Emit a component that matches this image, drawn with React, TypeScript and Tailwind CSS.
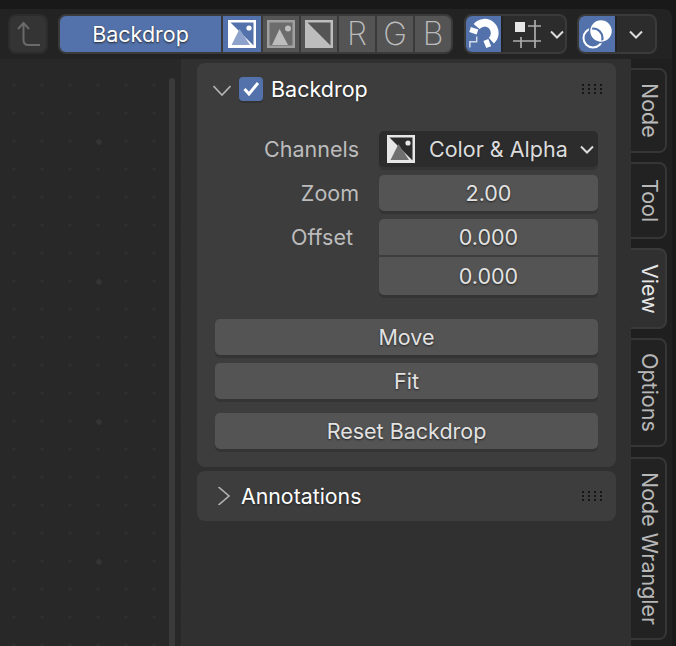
import React from "react";

const font = { fontFamily: "Inter, 'Noto Sans', sans-serif" };

function ColorAlpha({ fg, tri, inner }: { fg: string; tri: string; inner: string }) {
  return (
    <svg width="28" height="28" viewBox="0 0 28 28">
      <rect x="1.25" y="1.25" width="25.5" height="25.5" fill={inner} stroke={fg} strokeWidth="2.5" />
      <path d="M1 1 L27 27 L1 27 Z" fill={fg} />
      <path d="M11.5 9 L22 25 L3.5 25 Z" fill={tri} />
      <circle cx="21" cy="8" r="2.6" fill={fg} />
    </svg>
  );
}

function ColorIcon() {
  return (
    <svg width="28" height="28" viewBox="0 0 28 28">
      <rect x="1.25" y="1.25" width="25.5" height="25.5" fill="#6c6c6c" stroke="#a0a0a0" strokeWidth="2.5" />
      <path d="M12.5 9 L21 25 L5 25 Z" fill="#bdbdbd" />
      <circle cx="21" cy="8.5" r="3" fill="#bdbdbd" />
    </svg>
  );
}

function AlphaIcon() {
  return (
    <svg width="28" height="28" viewBox="0 0 28 28">
      <rect x="1.25" y="1.25" width="25.5" height="25.5" fill="#545454" stroke="#bdbdbd" strokeWidth="2.5" />
      <path d="M1 1 L27 27 L1 27 Z" fill="#bdbdbd" />
    </svg>
  );
}

function Magnet() {
  return (
    <svg width="36" height="36" viewBox="0 0 36 36" fill="none">
      <path d="M10.9 10.3 A10.5 10.5 0 1 1 26.1 24.7" stroke="#fff" strokeWidth="8" />
      <path d="M3.34 15.89 L5.06 10.75 L12.66 13.31 L10.94 18.45 Z M20.87 32.52 L25.89 30.52 L22.93 23.08 L17.91 25.08 Z" fill="#fff" />
      <path d="M4 32 V26 H11 V20.5" stroke="#fff" strokeOpacity="0.75" strokeWidth="1.5" />
    </svg>
  );
}

function Snap() {
  return (
    <svg width="28" height="28" viewBox="0 0 28 28" fill="none" stroke="#adadad" strokeWidth="1.7">
      <rect x="2" y="2" width="10" height="10" fill="#e6e6e6" stroke="none" />
      <path d="M22 0 V28 M8 17 V28 M0 21 H28 M15 6 H28" />
    </svg>
  );
}

function Overlay() {
  return (
    <svg width="36" height="36" viewBox="0 0 36 36" fill="none">
      <defs>
        <clipPath id="ovl">
          <circle cx="22" cy="15" r="9.5" />
        </clipPath>
      </defs>
      <circle cx="14" cy="22" r="9.5" stroke="#fff" strokeWidth="2" />
      <circle cx="22" cy="15" r="11.5" fill="#fff" stroke="#5372ab" strokeWidth="1.5" />
      <circle cx="14" cy="22" r="9.5" stroke="#5372ab" strokeWidth="2.2" clipPath="url(#ovl)" />
    </svg>
  );
}

function Chevron({ dir = "down" }: { dir?: "down" | "right" }) {
  return (
    <svg width="18" height="18" viewBox="0 0 18 18" className="shrink-0" fill="none" stroke="#b4b4b4" strokeWidth="1.6">
      {dir === "down" ? <path d="M0.5 6 L9 15 L17.5 6" /> : <path d="M3.5 0 L14 9 L3.5 18" />}
    </svg>
  );
}

function SmallChevron() {
  return (
    <svg width="14" height="9" viewBox="0 0 14 9" className="shrink-0" fill="none" stroke="#dcdcdc" strokeWidth="2">
      <path d="M1 1.5 L7 7.5 L13 1.5" />
    </svg>
  );
}

function Grip() {
  return (
    <div className="mr-[-4px] grid grid-cols-4 gap-x-[4px] gap-y-[2px]">
      {Array.from({ length: 12 }).map((_, i) => (
        <div key={i} className="w-[2px] h-[2px] bg-[#161616]" />
      ))}
    </div>
  );
}

function Tab({ label, className, active }: { label: string; className: string; active?: boolean }) {
  return (
    <div
      className={`${className} w-[36px] pl-[3px] rounded-r-[8px] border-r-2 border-t-2 border-b-2 flex items-center justify-center ${
        active ? "bg-[#303030] border-[#3a3a3a] text-[#e6e6e6]" : "bg-[#222222] border-[#363636] text-[#b8b8b8]"
      }`}
    >
      <span className="text-[21.5px] [writing-mode:vertical-rl] whitespace-nowrap">{label}</span>
    </div>
  );
}

function Button({ label, className = "" }: { label: string; className?: string }) {
  return (
    <div
      className={`h-[36px] rounded-[5px] bg-[#545454] shadow-[0_3px_0_#343434] flex items-center justify-center text-[21.5px] text-[#e2e2e2] [text-shadow:0_1px_2px_#222] ${className}`}
    >
      {label}
    </div>
  );
}

function Label({ children, className = "w-[144px] ml-0" }: { children: React.ReactNode; className?: string }) {
  return <div className={`shrink-0 text-right text-[21.5px] leading-[36px] text-[#bcbcbc] ${className}`}>{children}</div>;
}

export default function App() {
  return (
    <div style={font} className="w-[676px] h-[646px] overflow-hidden flex flex-col bg-[#191919] pr-[4px]">
      <header className="mt-[9px] h-[50px] shrink-0 bg-[#232323] rounded-tr-[8px] flex items-start pt-[5px] pl-[8px]">
        <div className="w-[40px] h-[40px] rounded-[8px] bg-[#343434] border-2 border-[#2c2c2c] flex items-center justify-center">
          <svg width="28" height="28" viewBox="0 0 28 28" fill="none" stroke="#6a6a6a" strokeWidth="2">
            <path d="M4 9 L9.5 3 L15 9 M9.5 3 V20 Q9.5 25 14.5 25 H26" />
          </svg>
        </div>
        <div className="ml-[10px] h-[40px] flex gap-[2px] rounded-[8px] border-2 border-[#3a3a3a] bg-[#3a3a3a] overflow-hidden">
          <div className="w-[161px] bg-[#5372ab] flex items-center justify-center text-[21.5px] text-white [text-shadow:0_1px_2px_#222]">
            Backdrop
          </div>
          <div className="w-[38px] bg-[#5372ab] flex items-center justify-center">
            <ColorAlpha fg="#ffffff" tri="#8ea3cc" inner="#5372ab" />
          </div>
          <div className="w-[36px] bg-[#545454] flex items-center justify-center">
            <ColorIcon />
          </div>
          <div className="w-[36px] bg-[#545454] flex items-center justify-center">
            <AlphaIcon />
          </div>
          {["R", "G", "B"].map((c) => (
            <div key={c} className="w-[36px] bg-[#545454] flex items-center justify-center text-[32px] font-extralight text-[#bcbcbc]">
              {c}
            </div>
          ))}
        </div>
        <div className="ml-[11px] h-[40px] w-[103px] flex rounded-[8px] border-2 border-[#3a3a3a] bg-[#2c2c2c] overflow-hidden">
          <div className="w-[35px] shrink-0 bg-[#5372ab] flex items-center justify-center">
            <Magnet />
          </div>
          <div className="flex-1 flex items-center pl-[10px] gap-[9px] border-l-2 border-[#232323]">
            <Snap />
            <SmallChevron />
          </div>
        </div>
        <div className="ml-[10px] h-[40px] w-[80px] flex rounded-[8px] border-2 border-[#3a3a3a] bg-[#2c2c2c] overflow-hidden">
          <div className="w-[36px] shrink-0 bg-[#5372ab] flex items-center justify-center">
            <Overlay />
          </div>
          <div className="flex-1 flex items-center justify-center border-l-2 border-[#232323]">
            <SmallChevron />
          </div>
        </div>
      </header>

      <div className="flex-1 flex min-h-0">
        <div className="w-[181px] shrink-0 bg-[#282828] bg-[radial-gradient(circle,#343434_2.5px,transparent_3px),radial-gradient(circle,#303030_1.2px,transparent_1.8px)] bg-[size:140px_140px,28px_28px] bg-[position:29px_13px,0_12px] pl-[169px] pt-[19px]">
          <div className="w-[6px] h-full rounded-t-[3px] bg-[#3a3a3a]" />
        </div>

        <main className="w-[450px] shrink-0 bg-[#303030] pl-[16px] pr-[15px] pt-[4px] flex flex-col gap-[4px]">
          <section className="h-[404px] rounded-[8px] bg-[#3d3d3d] px-[18px] flex flex-col">
            <div className="h-[52px] -ml-[2px] flex items-center">
              <Chevron />
              <div className="ml-[8px] w-[24px] h-[24px] rounded-[4px] bg-[#5372ab] shadow-[0_2px_0_#343434] flex items-center justify-center">
                <svg width="18" height="18" viewBox="0 0 18 18" fill="none" stroke="#fff" strokeWidth="3">
                  <path d="M2.5 9 L7 14 L16 3" />
                </svg>
              </div>
              <span className="ml-[8px] text-[21.5px] text-white [text-shadow:0_1px_2px_#222]">Backdrop</span>
              <div className="ml-auto">
                <Grip />
              </div>
            </div>

            <div className="mt-[16px] flex flex-col gap-[8px]">
              <div className="flex items-center">
                <Label>Channels</Label>
                <div className="ml-[20px] w-[219px] h-[36px] rounded-[5px] bg-[#2c2c2c] shadow-[0_3px_0_#343434] flex items-center pl-[8px] text-[21.5px] text-[#dcdcdc]">
                  <ColorAlpha fg="#e6e6e6" tri="#707070" inner="#2c2c2c" />
                  <span className="ml-[14px] whitespace-nowrap [text-shadow:0_1px_2px_#222]">Color &amp; Alpha</span>
                  <div className="ml-auto mr-[4px]">
                    <SmallChevron />
                  </div>
                </div>
              </div>
              <div className="flex items-center">
                <Label>Zoom</Label>
                <Button label="2.00" className="ml-[20px] w-[219px]" />
              </div>
              <div className="flex items-start">
                <Label className="w-[138px]">Offset</Label>
                <div className="ml-[26px] w-[219px] flex flex-col gap-[2px]">
                  <Button label="0.000" className="rounded-b-none shadow-none" />
                  <Button label="0.000" className="rounded-t-none h-[38px]" />
                </div>
              </div>
            </div>

            <div className="mt-[24px] flex flex-col">
              <Button label="Move" />
              <Button label="Fit" className="mt-[8px]" />
              <Button label="Reset Backdrop" className="mt-[14px]" />
            </div>
          </section>

          <section className="h-[50px] rounded-[8px] bg-[#3d3d3d] px-[18px] flex items-center">
            <Chevron dir="right" />
            <span className="ml-[8px] pt-[2px] text-[21.3px] text-white [text-shadow:0_1px_2px_#222]">Annotations</span>
            <div className="ml-auto">
              <Grip />
            </div>
          </section>
        </main>

        <aside className="flex-1 bg-[#1f1f1f] pt-[9px] flex flex-col">
          <Tab label="Node" className="h-[85px]" />
          <Tab label="Tool" className="h-[77px] mt-[9px]" />
          <Tab label="View" className="h-[81px] mt-[9px]" active />
          <Tab label="Options" className="h-[109px] mt-[9px]" />
          <Tab label="Node Wrangler" className="h-[183px] mt-[10px]" />
        </aside>
      </div>
    </div>
  );
}
